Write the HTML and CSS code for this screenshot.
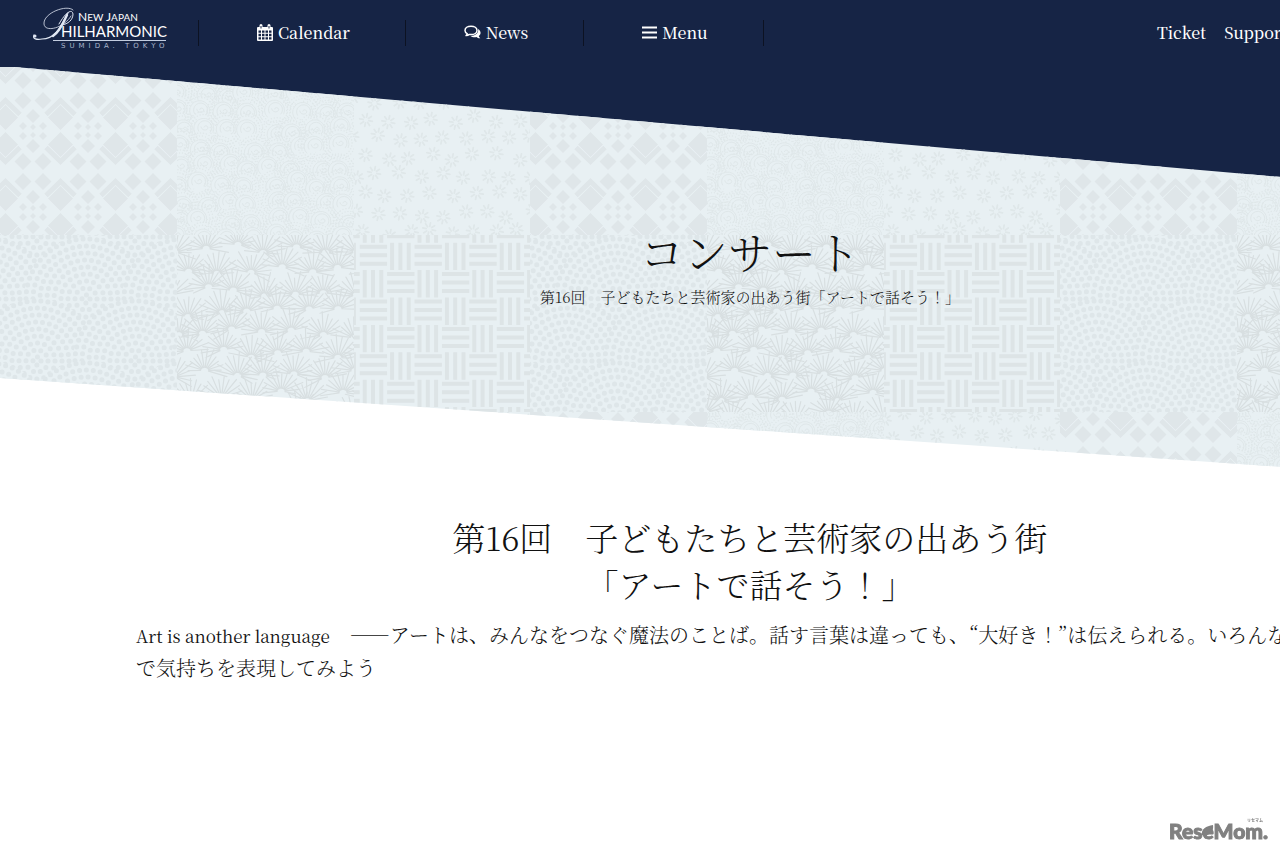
FILE: index.html
```html
<!DOCTYPE html>
<html lang="ja">
<head>
    <meta charset="UTF-8">
    <meta name="viewport" content="width=device-width, initial-scale=1.0">
    <title>コンサート | New Japan Philharmonic</title>
    <link rel="stylesheet" href="styles.css">
</head>
<body>
    <header class="header">
        <a class="logo" href="#" aria-label="New Japan Philharmonic">
            <svg width="140" height="46" viewBox="0 0 140 46">
                <g fill="none" stroke="#dfe6f2" stroke-linecap="round">
                    <path d="M42 4C36 -2 12 7 13 18C14 27 33 22 40 10" stroke-width="0.8"/>
                    <path d="M28 18C34 7 41 2 42 8C42 14 37 18 31 19" stroke-width="1"/>
                    <path d="M37 7C31 17 26 33 11 33C6 34 1 33 3 29" stroke-width="1.2"/>
                    <path d="M36 9C32 18 27 27 22 30" stroke-width="2.4"/>
                </g>
                <circle cx="4" cy="30" r="1.5" fill="#dfe6f2"/>
                <path d="M22 34.5H135" stroke="#c3cde0" stroke-width="1"/>
                <g class="logo-text">
                    <text x="47" y="15" font-size="12">N<tspan font-size="10">EW</tspan> J<tspan font-size="10">APAN</tspan></text>
                    <text x="30" y="31" font-size="15">HILHARMONIC</text>
                    <text class="logo-city" x="30" y="42" font-size="7">SUMIDA. TOKYO</text>
                </g>
            </svg>
        </a>
        <nav class="main-nav">
            <a href="#">
                <svg width="16" height="17" viewBox="0 0 16 17">
                    <path d="M1 3h14a1 1 0 0 1 1 1v12a1 1 0 0 1-1 1H1a1 1 0 0 1-1-1V4a1 1 0 0 1 1-1z" fill="#fff"/>
                    <path d="M1.500 6.500h2.500v2.300H1.500zM5 6.500h2.500v2.300H5zM8.500 6.500H11v2.300H8.500zM12 6.500h2.500v2.300H12zM1.500 9.800h2.500v2.400H1.500zM5 9.800h2.500v2.400H5zM8.500 9.800H11v2.400H8.500zM12 9.800h2.500v2.400H12zM1.500 13.200h2.500v2.400H1.500zM5 13.200h2.500v2.400H5zM8.500 13.200H11v2.400H8.500zM12 13.200h2.500v2.400H12z" fill="#162445"/>
                    <path d="M4 1.500v3M12 1.500v3" stroke="#fff" stroke-width="3" stroke-linecap="round"/>
                    <path d="M4 2v2.500M12 2v2.500" stroke="#162445" stroke-width="1"/>
                </svg>
                Calendar
            </a>
            <a href="#">
                <svg width="17" height="15" viewBox="0 0 17 15">
                    <path d="M14 4c3 1.500 3.500 5 .8 7 .2 1 .9 1.600 1.500 2.300-1.600.1-2.900-.4-3.800-1.200-2.500.5-4.600 0-6-1.100 5 0 8.500-3 7.500-7z" fill="#fff"/>
                    <path d="M7 1.200c3.400 0 6 1.800 6 4.200s-2.600 4.200-6 4.200c-.6 0-1.200-.1-1.700-.2-1 .8-2 1.100-3.200 1.200.6-.6 1-1.200 1.100-2C1.800 7.800 1 6.700 1 5.400 1 3 3.600 1.200 7 1.200z" fill="#162445" stroke="#fff" stroke-width="1.500" stroke-linejoin="round"/>
                </svg>
                News
            </a>
            <a href="#">
                <svg width="15" height="13" viewBox="0 0 15 13">
                    <path d="M1 1.500h13M1 6.500h13M1 11.500h13" stroke="#fff" stroke-width="2" stroke-linecap="square"/>
                </svg>
                Menu
            </a>
        </nav>
        <nav class="sub-nav">
            <a href="#">Ticket</a>
            <a href="#">Support</a>
        </nav>
    </header>

    <section class="hero">
        <svg class="hero-pattern" aria-hidden="true">
            <defs>
                <pattern id="wagara" y="-7" width="530" height="354" patternUnits="userSpaceOnUse"></pattern>
            </defs>
            <rect width="100%" height="100%" fill="#e8f0f3"/>
            <rect width="100%" height="100%" fill="url(#wagara)"/>
        </svg>
        <div class="hero-title">
            <h1>コンサート</h1>
            <p>第16回　子どもたちと芸術家の出あう街「アートで話そう！」</p>
        </div>
    </section>

    <main class="content">
        <h2>第16回　子どもたちと芸術家の出あう街<br>「アートで話そう！」</h2>
        <p><span class="en" lang="en">Art is another language</span>　――アートは、みんなをつなぐ魔法のことば。話す言葉は違っても、“大好き！”は伝えられる。いろんな<br>で気持ちを表現してみよう</p>
    </main>

    <div class="watermark">
        <svg width="100" height="26" viewBox="0 0 100 26" role="img" aria-label="ReseMom">
            <text class="mark" x="0" y="22" font-size="21">ReseMom.</text>
            <path d="M33 18C32 12 37 9 44 8C45 14 41 19 35 18z" fill="#808080"/>
            <text class="ruby" x="78" y="5" font-size="4">リセマム</text>
        </svg>
    </div>
    <script src="pattern.js"></script>
</body>
</html>
```

FILE: styles.css
```css
* {
    box-sizing: border-box;
}
body {
    margin: 0;
    min-width: 1500px;
    background-color: #fff;
    color: #111;
    font-family: "Noto Serif CJK JP", "Liberation Serif", "Noto Sans CJK JP", serif;
    font-weight: 300;
}
html {
    overflow: hidden;
}
a {
    color: #fff;
    text-decoration: none;
}
.header {
    display: flex;
    align-items: center;
    height: 65px;
    background-color: #162445;
    font-size: 16px;
    font-weight: 500;
}
.logo {
    display: flex;
    width: 198px;
    padding: 0 0 8px 31px;
}
.logo-text {
    fill: #fff;
    font-family: Lato, sans-serif;
    font-weight: 400;
}
.logo-city {
    fill: #aab5cc;
    font-family: "DejaVu Sans", sans-serif;
    letter-spacing: 4px;
}
.main-nav {
    display: flex;
    border-left: 1px solid #0c1222;
}
.main-nav a {
    display: flex;
    align-items: center;
    gap: 5px;
    padding: 0 55px 0 58px;
    border-right: 1px solid #0c1222;
    line-height: 26px;
}
.sub-nav {
    display: flex;
    gap: 18px;
    width: 343px;
    margin-left: auto;
}
.hero {
    position: relative;
    height: 417px;
}
.hero::before {
    content: "";
    position: absolute;
    top: 0;
    left: 0;
    width: 100%;
    height: 131px;
    background-color: #162445;
}
.hero-pattern {
    position: absolute;
    width: 100%;
    height: 100%;
    clip-path: polygon(0 2px, 1% 2px, 100% 131px, 100% 100%, 0 313px);
}
.hero-title {
    position: relative;
    padding-top: 156px;
    text-align: center;
}
.hero-title h1 {
    margin: 0 0 4px;
    font-size: 44px;
    font-weight: 300;
    line-height: 60px;
}
.hero-title p {
    margin: 0;
    font-size: 15px;
    line-height: 24px;
}
.content {
    padding: 31px 136px;
}
.content h2 {
    margin: 0 0 12px;
    font-size: 33px;
    font-weight: 300;
    line-height: 47px;
    text-align: center;
}
.content p {
    margin: 0;
    font-size: 20px;
    line-height: 32px;
    white-space: nowrap;
}
.content .en {
    font-size: 17px;
    font-weight: 400;
}
.watermark {
    position: fixed;
    right: 11px;
    bottom: 9px;
}
.watermark svg {
    display: block;
}
.mark {
    fill: #808080;
    stroke: #808080;
    font-family: Lato, sans-serif;
    font-weight: 900;
}
.ruby {
    fill: #808080;
    font-family: "Noto Sans CJK JP", sans-serif;
    font-weight: 700;
}
```

FILE: pattern.js
```js
// Draws the six traditional textures that repeat behind the page title
const SIZE = 177;
const BG = '#e8f0f3';

let seed = 7;
function rand() {
    seed = (seed * 16807) % 2147483647;
    return seed / 2147483647;
}

function tile(col, row, body) {
    return `<svg x="${col * SIZE}" y="${row * SIZE}" width="${SIZE}" height="${SIZE}">${body}</svg>`;
}

function diamond(x, y, r) {
    return `M${x - r} ${y}l${r} ${-r} ${r} ${r} ${-r} ${r}z`;
}

function diamonds() {
    let fill = '';
    let line = '';
    for (let x = -22; x < 240; x += 55) {
        for (let y = -8; y < 260; y += 81) {
            for (const s of [-1, 1]) {
                const mid = y + s * 40.5;
                fill += diamond(x + 27.5, y + s * 13.5, 12.5);
                fill += diamond(x, y + s * 15, 7);
                fill += diamond(x - 10, y + s * 5, 4) + diamond(x + 10, y + s * 5, 4);
                fill += diamond(x, y + s * 4, 3);
                fill += diamond(x - 10, mid - s * 10, 8.5) + diamond(x + 10, mid - s * 10, 8.5);
                line += `M${x + 13} ${mid - s * 24}l14.500 ${s * 14} 14.500 ${-s * 14}`;
            }
        }
    }
    return `<path d="${fill}" fill="#dfe6e9"/><path d="${line}" fill="none" stroke="#dfe6e9" stroke-width="5"/>`;
}

function curls() {
    let out = '';
    for (let y = 0; y < 200; y += 18) {
        for (let x = 0; x < 200; x += 24) {
            const cx = x + rand() * 14 - 7;
            const cy = y + rand() * 10 - 5;
            out += `<circle cx="${cx}" cy="${cy}" r="16" stroke-dasharray="0 3" stroke-width="1.500" stroke-linecap="round"/>`;
            out += `<circle cx="${cx}" cy="${cy}" r="13" stroke-dasharray="0 3" stroke-width="1.500" stroke-linecap="round"/>`;
            out += `<path fill="${BG}" d="M${cx + 9} ${cy + 5}a10 10 0 1 0 -16 3"/>`;
            out += `<path d="M${cx + 6} ${cy + 5}a7 7 0 1 0 -11 -1M${cx} ${cy}a2 2 0 1 1 3 2a4 4 0 0 1 -6 -3"/>`;
        }
    }
    return `<g fill="none" stroke="#dfe7e9">${out}</g>`;
}

function flowers() {
    let d = '';
    for (let row = 0; row < 10; row++) {
        for (let col = 0; col < 9; col++) {
            const cx = col * 22 + (row % 2) * 11 + rand() * 6 - 3;
            const cy = row * 19 + 4 + rand() * 8 - 4;
            for (let i = 0; i < 8; i++) {
                const c = Math.cos(i * Math.PI / 4 + 0.2);
                const s = Math.sin(i * Math.PI / 4 + 0.2);
                d += `M${cx + c * 3} ${cy + s * 3}L${cx + c * 6.5} ${cy + s * 6.5}`;
            }
        }
    }
    return `<path d="${d}" stroke="#dfe7e9" stroke-width="1.800" stroke-linecap="round"/>`;
}

function waves() {
    let out = '';
    for (let row = -1; row < 4; row++) {
        for (let col = -1; col < 3; col++) {
            const cx = 37 + col * 98 + (row % 2 ? 0 : 49);
            const cy = row * 62 + 64;
            out += `<circle cx="${cx}" cy="${cy}" r="62" fill="${BG}" stroke="none"/>`;
            for (let r = 4; r < 62; r += 7) {
                const count = Math.round(2 * Math.PI * r / 7);
                out += `<circle cx="${cx}" cy="${cy}" r="${r}" stroke-dasharray="0 ${2 * Math.PI * r / count}"/>`;
            }
        }
    }
    return `<g fill="none" stroke="#dee6e9" stroke-width="5" stroke-linecap="round">${out}</g>`;
}

function pines() {
    let out = '';
    for (let row = 0; row < 9; row++) {
        for (let col = 0; col < 7; col++) {
            const cx = col * 30 + (row % 2) * 15 + rand() * 8 - 6;
            const cy = row * 21 + 14 + rand() * 10 - 5;
            const turn = rand() * 0.8 - 0.4;
            let d = '';
            for (let i = 0; i < 13; i++) {
                const a = Math.PI * (1.5 + (i - 6) / 11) + turn;
                const r = 16 + rand() * 8;
                d += `M${cx + Math.cos(a) * 4} ${cy + Math.sin(a) * 3}L${cx + Math.cos(a) * r} ${cy + Math.sin(a) * r}`;
            }
            const deg = turn * 180 / Math.PI;
            out += `<path d="M${cx - 14} ${cy + 1}a14 14 0 0 1 28 0z" fill="${BG}" stroke="none" transform="rotate(${deg} ${cx} ${cy})"/>`;
            out += `<path d="${d}"/>`;
        }
    }
    return `<g stroke="#d8dfe1" stroke-width="1.200" stroke-linecap="round">${out}</g>`;
}

function basket() {
    let d = '';
    for (let i = -1; i < 7; i++) {
        for (let j = -1; j < 7; j++) {
            const x = 5.7 + i * 27.4;
            const y = 9.7 + j * 27.4;
            for (let k = 0; k < 3; k++) {
                if ((i + j) % 2 === 0) {
                    d += `M${x} ${y + 2 + k * 8.5}h27.400`;
                } else {
                    d += `M${x + 5 + k * 8.3} ${y - 2}v27.400`;
                }
            }
        }
    }
    return `<path d="${d}" stroke="#dde4e6" stroke-width="4"/>`;
}

document.getElementById('wagara').innerHTML =
    tile(0, 0, diamonds()) + tile(1, 0, curls()) + tile(2, 0, flowers()) +
    tile(0, 1, waves()) + tile(1, 1, pines()) + tile(2, 1, basket());
```
